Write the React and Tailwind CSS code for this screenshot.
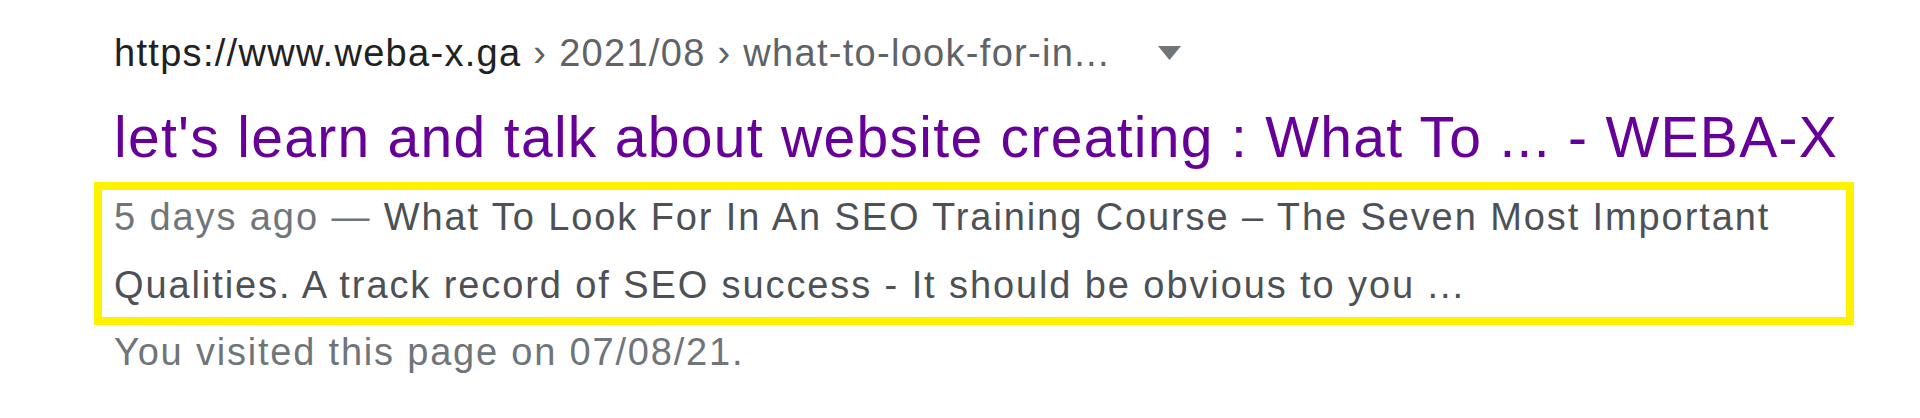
import React from 'react';

export default function App() {
  return (
    <div className="w-full h-[418px] bg-white pl-[114px] pt-[29px] font-['Liberation_Sans',Arial,sans-serif]">
      {/* Breadcrumb url */}
      <div className="flex items-center text-[38px] leading-[48px] tracking-[1.3px] whitespace-nowrap">
        <span className="text-[#202124]">https://www.weba-x.ga</span>
        <span className="text-[#5f6368]">&nbsp;› 2021/08 › what-to-look-for-in...</span>
        <svg className="ml-[48px]" width="23" height="14" viewBox="0 0 23 14">
          <path d="M0 0 L23 0 L11.5 14 Z" fill="#70757a" />
        </svg>
      </div>

      {/* Title */}
      <h3 className="mt-[26px] text-[57px] leading-[68px] tracking-[1.3px] text-[#660099] whitespace-nowrap">
        let's learn and talk about website creating : What To ... - WEBA-X
      </h3>

      {/* Highlighted snippet */}
      <div className="mt-[11px] -ml-[20px] w-[1760px] border-8 border-[#fff200] pl-3">
        <p className="-mt-[7px] -mb-[2px] text-[38px] leading-[68px] tracking-[1.9px] text-[#4d5156]">
          <span className="text-[#70757a]">5 days ago — </span>
          What To Look For In An SEO Training Course – The Seven Most Important Qualities. A track record of SEO success - It should be obvious to you ...
        </p>
      </div>

      <p className="mt-[2px] text-[38px] leading-[50px] tracking-[1.8px] text-[#70757a]">
        You visited this page on 07/08/21.
      </p>
    </div>
  );
}
